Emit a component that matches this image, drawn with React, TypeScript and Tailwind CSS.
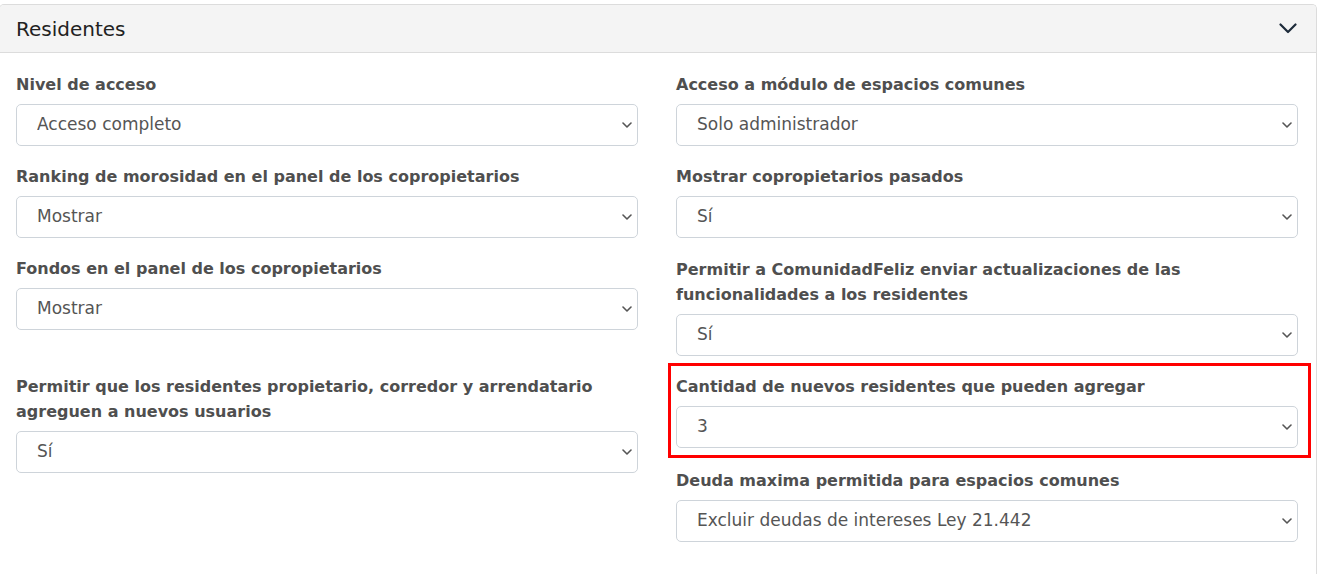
import React from "react";

const font = { fontFamily: '"DejaVu Sans", "Liberation Sans", sans-serif' };

type Field = { label: string; value: string; highlight?: boolean; top?: string };

const left: Field[] = [
  { label: "Nivel de acceso", value: "Acceso completo" },
  { label: "Ranking de morosidad en el panel de los copropietarios", value: "Mostrar" },
  { label: "Fondos en el panel de los copropietarios", value: "Mostrar" },
  {
    label: "Permitir que los residentes propietario, corredor y arrendatario agreguen a nuevos usuarios",
    value: "Sí",
    top: "mt-[26px]",
  },
];

const right: Field[] = [
  { label: "Acceso a módulo de espacios comunes", value: "Solo administrador" },
  { label: "Mostrar copropietarios pasados", value: "Sí" },
  {
    label: "Permitir a ComunidadFeliz enviar actualizaciones de las funcionalidades a los residentes",
    value: "Sí",
    top: "mt-px",
  },
  { label: "Cantidad de nuevos residentes que pueden agregar", value: "3", highlight: true },
  {
    label: "Deuda maxima permitida para espacios comunes",
    value: "Excluir deudas de intereses Ley 21.442",
    top: "mt-[2px]",
  },
];

function SelectBox({ value }: { value: string }) {
  return (
    <div className="relative">
      <select
        defaultValue={value}
        style={font}
        className="h-[42px] w-full appearance-none rounded-[5px] border border-[#ced4da] bg-white pl-5 pr-10 text-[17px] text-[#555] outline-none"
      >
        <option>{value}</option>
      </select>
      <svg
        className="pointer-events-none absolute right-[6px] top-1/2 -translate-y-1/2"
        width="10"
        height="6"
        viewBox="0 0 10 6"
        fill="none"
      >
        <path d="M1 1l4 4 4-4" stroke="#555" strokeWidth="1.6" strokeLinecap="round" strokeLinejoin="round" />
      </svg>
    </div>
  );
}

function FieldBlock({ f }: { f: Field }) {
  return (
    <div className={`relative ${f.top ?? ""}`}>
      {f.highlight && (
        <div className="pointer-events-none absolute -bottom-[10px] -left-2 -right-[13px] -top-[11px] border-[3px] border-[#ff0000]" />
      )}
      <div className="mb-[7px] text-[16px] font-bold leading-[25px] text-[#4f4f4f]">{f.label}</div>
      <SelectBox value={f.value} />
    </div>
  );
}

export default function App() {
  return (
    <div className="min-h-[574px] bg-white pt-1" style={font}>
      <div className="ml-[-1px] w-[1318px] overflow-hidden rounded-t-[5px] border border-b-0 border-[#dcdcdc] pb-8">
        <div className="flex h-[48px] items-center justify-between border-b border-[#dcdcdc] bg-[#f4f4f4] pl-4 pr-[19px]">
          <span className="text-[20px] text-[#222]">Residentes</span>
          <svg width="18" height="11" viewBox="0 0 18 11" fill="none">
            <path d="M1.5 1.5l7.5 7.5 7.5-7.5" stroke="#1d2b3a" strokeWidth="2.2" strokeLinecap="round" strokeLinejoin="round" />
          </svg>
        </div>
        <div className="flex gap-x-[38px] pl-4 pr-[18px] pt-[19px]">
          <div className="flex flex-1 flex-col gap-y-[18px]">
            {left.map((f) => (
              <FieldBlock key={f.label} f={f} />
            ))}
          </div>
          <div className="flex flex-1 flex-col gap-y-[18px]">
            {right.map((f) => (
              <FieldBlock key={f.label} f={f} />
            ))}
          </div>
        </div>
      </div>
    </div>
  );
}
